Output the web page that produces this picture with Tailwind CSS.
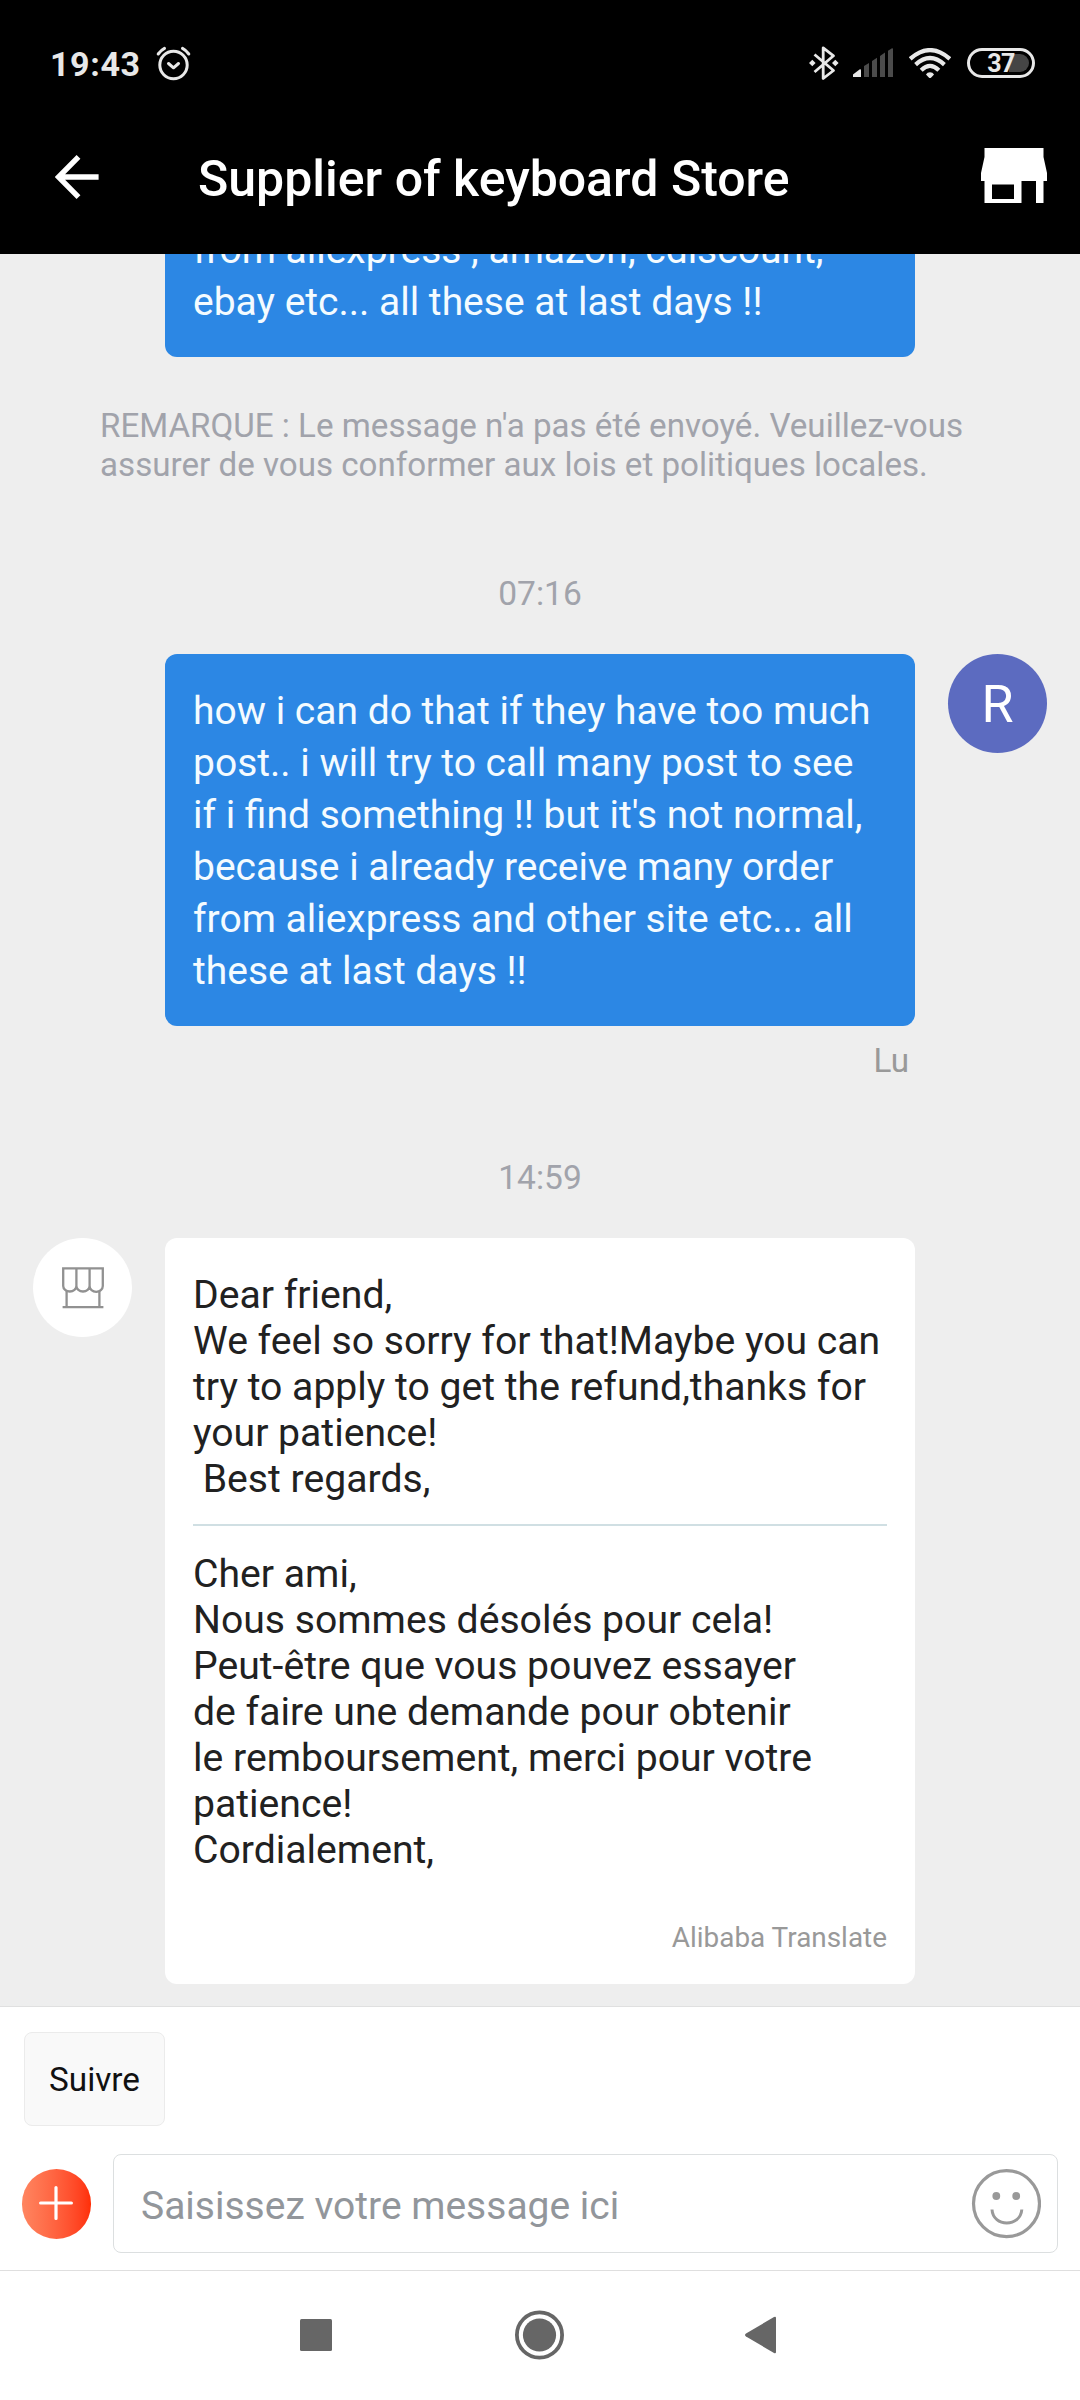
<!DOCTYPE html>
<html lang="fr">
<head>
    <meta charset="UTF-8">
    <meta name="viewport" content="width=device-width, initial-scale=1.0">
    <title>Supplier of keyboard Store</title>
    <script src="https://cdn.jsdelivr.net/npm/@tailwindcss/browser@4"></script>
</head>
<body class="bg-[#eeeeee] font-['Roboto',sans-serif]">
<div class="flex h-[2400px] w-[1080px] flex-col overflow-hidden">

    <!-- Status bar + title bar -->
    <header class="h-[254px] shrink-0 bg-black text-white">
        <div class="flex h-[126px] items-center pl-[50px] pr-[45px] text-[#e8e8e8]">
            <span class="text-[34px] font-bold leading-10 tracking-[0.6px] pt-[2px]">19:43</span>
            <svg class="ml-[14px] h-[36px] w-[36px]" viewBox="0 0 36 36" fill="none" stroke="currentColor" stroke-width="3" stroke-linecap="round" stroke-linejoin="round">
                <circle cx="18.5" cy="20" r="13.7"/>
                <path d="M3.2 9Q6 5.2 9.5 3.4M33.8 9Q31 5.2 27.5 3.4"/>
                <path d="M13.5 18.5L18.5 22.8L23.5 18.5"/>
            </svg>

            <div class="ml-auto flex items-center">
                <svg class="h-[36px] w-[32px]" viewBox="0 0 32 36" fill="none" stroke="currentColor" stroke-width="2.8">
                    <path d="M6.5 9.5L25.5 25.5L15.2 33.5V2.8L25.5 10.8L6.5 27" stroke-linejoin="round"/>
                    <path d="M4.3 14.7L7.6 18L4.3 21.3L1 18ZM27.3 14.7L30.6 18L27.3 21.3L24 18Z" fill="currentColor" stroke="none"/>
                </svg>
                <svg class="ml-[13px] h-[30px] w-[40px]" viewBox="0 0 40 30">
                    <path d="M0 29V26.5L6.5 21.5Q8 20.5 8 22.5V29Z" fill="#e8e8e8"/>
                    <path d="M11 29V18L16 15V29ZM19 29V13L24 9.8V29ZM27 29V8L32 4.5V29ZM35 29V2.8L39 0.2Q40 0 40 1V29Z" fill="#4b4b4b"/>
                </svg>
                <svg class="ml-[16px] h-[30px] w-[42px]" viewBox="0 0 42 30" fill="none" stroke="currentColor" stroke-width="4.2">
                    <path d="M1.2 10.8Q21 -6.6 40.8 10.8"/>
                    <path d="M6.6 16.6Q21 3.4 35.4 16.6"/>
                    <path d="M12.2 22.2Q21 13.6 29.8 22.2"/>
                    <path d="M21 24.2Q23.8 24.2 25 26.4L22.2 29.4Q21 30.4 19.8 29.4L17 26.4Q18.2 24.2 21 24.2Z" fill="currentColor" stroke="none"/>
                </svg>
                <div class="relative ml-[16px] flex h-[30px] w-[68px] items-center justify-center rounded-full border-3 border-[#e8e8e8]">
                    <span class="absolute right-[3px] top-[3px] h-[18px] w-[20px] rounded-r-full bg-[#454545]"></span>
                    <span class="relative pt-[1px] text-[25px] font-bold leading-[24px] tracking-[-0.5px]">37</span>
                </div>
            </div>
        </div>

        <div class="flex h-[128px] items-start pl-[55px] pr-[33px]">
            <svg class="mt-[28px] h-[46px] w-[44px]" viewBox="0 0 44 46" fill="none" stroke="currentColor" stroke-width="5.4">
                <path d="M23.5 2.8L3.5 23L23.5 43.2M3 23H43.6"/>
            </svg>
            <h1 class="ml-[99px] mt-[23px] text-[50px] font-medium leading-[60px]">Supplier of keyboard Store</h1>
            <svg class="ml-auto mt-[22px] h-[55px] w-[66px]" viewBox="0 0 66 55" fill="currentColor">
                <path fill-rule="evenodd" d="M3.5 0H62.5V9L66 25V33H62.5V55H55V33H40.5V55H3.5V33H0V25L3.5 9ZM11 36.5V51H33V36.5Z"/>
            </svg>
        </div>
    </header>

    <!-- Conversation -->
    <main class="h-[1752px] shrink-0 overflow-hidden">
        <div class="mx-[165px] flex h-[103px] flex-col justify-end overflow-hidden rounded-b-xl bg-[#2c87e4] px-7 pb-[29px]">
            <p class="text-[39px] leading-[52px] text-[#f4fbff]">from aliexpress , amazon, cdiscount,<br>ebay etc... all these at last days !!</p>
        </div>

        <p class="mt-[49px] pl-[100px] text-[33.15px] leading-[39px] text-[#a1a3ab]">REMARQUE : Le message n'a pas été envoyé. Veuillez-vous<br>assurer de vous conformer aux lois et politiques locales.</p>

        <p class="mt-[90px] text-center text-[33.5px] leading-[39px] text-[#a1a3ab]">07:16</p>

        <div class="mt-[41px] flex items-start pl-[165px] pr-[33px]">
            <div class="w-[750px] rounded-xl bg-[#2c87e4] px-7 pb-[29px] pt-[31px]">
                <p class="text-[39px] leading-[52px] text-[#f4fbff]">how i can do that if they have too much<br>post.. i will try to call many post to see<br>if i find something !! but it's not normal,<br>because i already receive many order<br>from aliexpress and other site etc... all<br>these at last days !!</p>
            </div>
            <div class="ml-auto flex h-[99px] w-[99px] items-center justify-center rounded-full bg-[#5c6bc0] pt-[2px] text-[52px] leading-none text-white">R</div>
        </div>
        <p class="mt-[15px] pr-[171px] text-right text-[33.25px] leading-[39px] text-[#999999]">Lu</p>

        <p class="mt-[78px] text-center text-[33.5px] leading-[39px] text-[#a1a3ab]">14:59</p>

        <div class="mt-[41px] flex items-start gap-[33px] pl-[33px]">
            <div class="flex h-[99px] w-[99px] items-center justify-center rounded-full bg-white">
                <svg class="h-[42px] w-[42px]" viewBox="0 0 42 42" fill="none" stroke="#919191" stroke-width="2.3">
                    <path d="M1.2 1.3H40.8V19A6.2 5.5 0 0 1 27.6 19A6.6 5.5 0 0 1 14.4 19A6.6 5.5 0 0 1 1.2 19Z"/>
                    <path d="M14.4 1.3V19M27.6 1.3V19M4.6 24V40M37.4 24V40M0.6 40.2H41.4"/>
                </svg>
            </div>
            <div class="w-[750px] rounded-xl bg-white px-7 pb-[29px] pt-[34px] text-[39.15px] leading-[46px] text-[#212121]">
                <p>Dear friend,<br>We feel so sorry for that!Maybe you can<br>try to apply to get the refund,thanks for<br>your patience!<br>&nbsp;Best regards,</p>
                <div class="mt-[22px] h-[2px] bg-[#d0dfe3]"></div>
                <p class="mt-[25px]">Cher ami,<br>Nous sommes désolés pour cela!<br>Peut-être que vous pouvez essayer<br>de faire une demande pour obtenir<br>le remboursement, merci pour votre<br>patience!<br>Cordialement,</p>
                <p class="mt-[48px] text-right text-[27.9px] leading-[34px] text-[#999999]">Alibaba Translate</p>
            </div>
        </div>
    </main>

    <!-- Composer -->
    <footer class="h-[264px] shrink-0 border-t border-[#e0e0e0] bg-white pl-[22px] pr-[22px] pt-[25px]">
        <button class="ml-[2px] block h-[94px] w-[141px] rounded-lg border border-[#ebebeb] bg-[#f9f9f9] pt-[2px] text-[33.3px] leading-10 text-[#111111]">Suivre</button>
        <div class="mt-7 flex items-center">
            <div class="flex h-[70px] w-[69px] items-center justify-center rounded-full bg-linear-to-r from-[#ff8560] to-[#ff2e05] pr-[1px] pb-[1px]">
                <svg class="h-[34px] w-[34px]" viewBox="0 0 34 34" stroke="white" stroke-width="3.2" stroke-linecap="round">
                    <path d="M17 1.6V32.4M1.6 17H32.4"/>
                </svg>
            </div>
            <div class="ml-[22px] flex h-[99px] flex-1 items-center justify-between rounded-lg border border-[#dcdfe0] pl-[27px] pr-[16px]">
                <span class="mt-[5px] text-[39px] leading-[46px] text-[#92969b]">Saisissez votre message ici</span>
                <svg class="h-[70px] w-[70px]" viewBox="0 0 70 70" fill="none" stroke="#999999" stroke-width="3.2">
                    <circle cx="35.5" cy="34.6" r="33"/>
                    <path d="M21 40.5C22 58.5 49.5 58.5 50.8 40.5" stroke-width="3"/>
                    <circle cx="25.3" cy="27" r="3.9" fill="#999999" stroke="none"/>
                    <circle cx="45.2" cy="27" r="3.9" fill="#999999" stroke="none"/>
                </svg>
            </div>
        </div>
    </footer>

    <!-- System navigation -->
    <nav class="flex flex-1 items-center border-t border-[#dfdfdf] bg-white pb-[1px] pl-[300px]">
        <svg class="h-[50px] w-[478px]" viewBox="0 0 478 50" fill="#666666">
            <rect x="0" y="9" width="32" height="32" rx="1.5"/>
            <circle cx="239.5" cy="25" r="22.6" fill="none" stroke="#666666" stroke-width="3.8"/>
            <circle cx="239.5" cy="25" r="16.6"/>
            <path d="M446 23.5L474 7Q476 6.2 476 8V42Q476 43.8 474 43L446 26.5Q444 25 446 23.5Z"/>
        </svg>
    </nav>
</div>
</body>
</html>
